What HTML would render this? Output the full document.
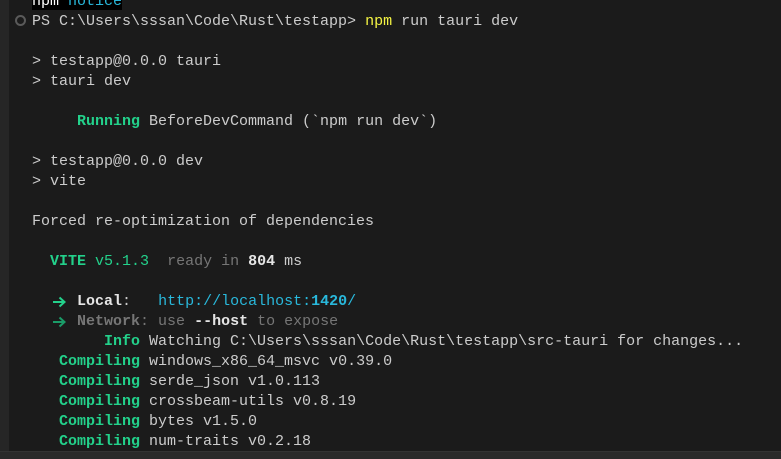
<!DOCTYPE html>
<html><head><meta charset="utf-8"><style>
html,body{margin:0;padding:0;}
body{width:781px;height:458px;overflow:hidden;background:#1b1b1b;position:relative;font-family:"Liberation Mono",monospace;font-size:15px;color:#cccccc;}
.ls{position:absolute;left:0;top:0;width:9px;height:452px;background:#262626;}
.bs{position:absolute;left:0;top:451px;width:781px;height:7px;background:#2a2a2a;border-top:1px solid #333;}
.l{position:absolute;left:32px;height:20px;line-height:20px;white-space:pre;margin-top:2px;}
.g{color:#23d18b;font-weight:bold;}
.gn{color:#23d18b;}
.d{color:#767676;}
.b{font-weight:bold;color:#e5e5e5;}
.y{color:#f5f543;}
.c{color:#29b8db;}
.ar{display:inline-block;width:9px;height:20px;position:relative;vertical-align:top;}
.ar svg{position:absolute;left:2px;top:4px;}
.circ{position:absolute;left:15px;top:15px;width:7px;height:7px;border:2px solid #5a5a5a;border-radius:50%;}
</style></head><body>
<div class="ls"></div>
<div class="l" style="top:-10px"><span style="background:#000;color:#fff">npm </span><span style="background:#000;color:#29b8db">notice</span></div>
<div class="circ"></div>
<div class="l" style="top:10px">PS C:\Users\sssan\Code\Rust\testapp&gt; <span class="y">npm</span> run tauri dev</div>
<div class="l" style="top:50px">&gt; testapp@0.0.0 tauri</div>
<div class="l" style="top:70px">&gt; tauri dev</div>
<div class="l" style="top:110px">     <span class="g">Running</span> BeforeDevCommand (`npm run dev`)</div>
<div class="l" style="top:150px">&gt; testapp@0.0.0 dev</div>
<div class="l" style="top:170px">&gt; vite</div>
<div class="l" style="top:210px">Forced re-optimization of dependencies</div>
<div class="l" style="top:250px">  <span class="g">VITE</span><span class="gn"> v5.1.3</span>  <span class="d">ready in </span><span class="b">804</span> ms</div>
<div class="l" style="top:290px">  <span class="ar"><svg width="14" height="12" viewBox="0 0 14 12"><path d="M1 6H12M7.5 1.5L12.5 6L7.5 10.5" fill="none" stroke="#23d18b" stroke-width="2"/></svg></span>  <span class="b">Local</span>:   <span class="c">http://localhost:<b>1420</b>/</span></div>
<div class="l" style="top:310px">  <span class="ar"><svg width="14" height="12" viewBox="0 0 14 12"><path d="M1 6H12M7.5 1.5L12.5 6L7.5 10.5" fill="none" stroke="#1a9c68" stroke-width="2"/></svg></span>  <span class="d"><b>Network</b>: use </span><span class="b">--host</span><span class="d"> to expose</span></div>
<div class="l" style="top:330px">        <span class="g">Info</span> Watching C:\Users\sssan\Code\Rust\testapp\src-tauri for changes...</div>
<div class="l" style="top:350px">   <span class="g">Compiling</span> windows_x86_64_msvc v0.39.0</div>
<div class="l" style="top:370px">   <span class="g">Compiling</span> serde_json v1.0.113</div>
<div class="l" style="top:390px">   <span class="g">Compiling</span> crossbeam-utils v0.8.19</div>
<div class="l" style="top:410px">   <span class="g">Compiling</span> bytes v1.5.0</div>
<div class="l" style="top:430px">   <span class="g">Compiling</span> num-traits v0.2.18</div>
<div class="bs"></div>
</body></html>
